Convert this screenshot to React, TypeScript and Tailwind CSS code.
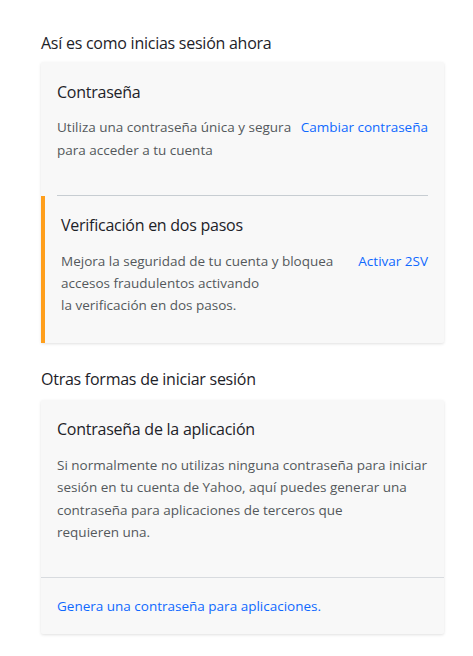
export default function App() {
  return (
    <div
      className="min-h-screen bg-white pl-[41px] pr-[29px] pt-[32px] text-[#1d2228]"
      style={{ fontFamily: '"Open Sans", Arial, sans-serif' }}
    >
      <h2 className="text-[16px] leading-[22px] tracking-[-0.25px]">Así es como inicias sesión ahora</h2>
      <div className="mt-[8px] rounded-[2px] bg-[#f8f8f8] shadow-[0_1px_3px_rgba(0,0,0,0.12)]">
        <div className="px-4 pt-[18px] pb-[33px]">
          <h3 className="text-[16px] leading-[24px] tracking-[-0.25px]">Contraseña</h3>
          <div className="mt-[12px] flex items-start justify-between gap-2 text-[13.5px] leading-[23px]">
            <p className="whitespace-nowrap text-[#54585c]">
              Utiliza una contraseña única y segura
              <br />
              para acceder a tu cuenta
            </p>
            <a className="whitespace-nowrap text-[#0f69ff]">Cambiar contraseña</a>
          </div>
        </div>
        <div className="mx-4 border-t border-[#c7cdd2]" />
        <div className="flex">
          <div className="w-[4px] bg-[#ff9f1c]" />
          <div className="flex-1 pl-4 pr-4 pt-[17px] pb-[27px]">
            <h3 className="text-[16px] leading-[24px] tracking-[-0.25px]">Verificación en dos pasos</h3>
            <div className="mt-[13px] flex items-start justify-between gap-2 text-[13.5px] leading-[22px]">
              <p className="whitespace-nowrap text-[#54585c]">
                Mejora la seguridad de tu cuenta y bloquea
                <br />
                accesos fraudulentos activando
                <br />
                la verificación en dos pasos.
              </p>
              <a className="whitespace-nowrap text-[#0f69ff]">Activar 2SV</a>
            </div>
          </div>
        </div>
      </div>

      <h2 className="mt-[25px] text-[16px] leading-[22px] tracking-[-0.25px]">Otras formas de iniciar sesión</h2>
      <div className="mt-[10px] rounded-[2px] bg-[#f8f8f8] shadow-[0_1px_3px_rgba(0,0,0,0.12)]">
        <div className="px-4 pt-[17px] pb-[33px]">
          <h3 className="text-[16px] leading-[24px] tracking-[-0.25px]">Contraseña de la aplicación</h3>
          <p className="mt-[13px] whitespace-nowrap text-[13.5px] leading-[22.4px] text-[#54585c]">
            Si normalmente no utilizas ninguna contraseña para iniciar
            <br />
            sesión en tu cuenta de Yahoo, aquí puedes generar una
            <br />
            contraseña para aplicaciones de terceros que
            <br />
            requieren una.
          </p>
        </div>
        <div className="border-t border-[#d8dbdf]" />
        <div className="px-4 pt-[15px] pb-[17px]">
          <a className="text-[13.5px] leading-[22px] text-[#0f69ff]">
            Genera una contraseña para aplicaciones.
          </a>
        </div>
      </div>
    </div>
  );
}
